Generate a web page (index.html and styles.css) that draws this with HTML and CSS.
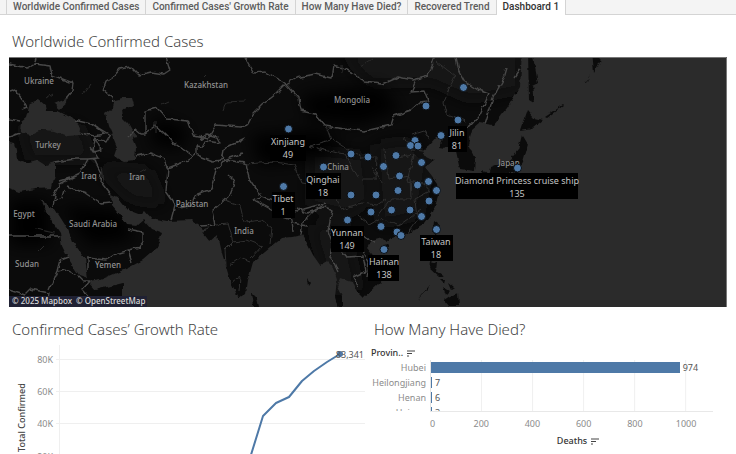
FILE: index.html
```html
<!DOCTYPE html>
<html lang="en">
<head>
<meta charset="utf-8">
<title>Dashboard 1</title>
<link rel="stylesheet" href="styles.css">
</head>
<body>
<nav class="tabs">
  <a class="tab" href="#">Worldwide Confirmed Cases</a>
  <a class="tab" href="#">Confirmed Cases' Growth Rate</a>
  <a class="tab" href="#">How Many Have Died?</a>
  <a class="tab" href="#">Recovered Trend</a>
  <a class="tab tab-active" href="#" aria-current="page">Dashboard 1</a>
</nav>
<main class="dashboard">
  <section class="map-panel">
    <h2 class="title">Worldwide Confirmed Cases</h2>
    <svg class="map" viewBox="9 57 718 250" role="img" aria-label="Map of confirmed cases">
      <defs>
        <filter id="rough" filterUnits="userSpaceOnUse" x="0" y="40" width="736" height="280" color-interpolation-filters="sRGB">
          <feTurbulence type="fractalNoise" baseFrequency="0.14" numOctaves="2" seed="4" result="n"/>
          <feDisplacementMap in="SourceGraphic" in2="n" scale="5" xChannelSelector="R" yChannelSelector="G"/>
        </filter>
        <filter id="soft"><feGaussianBlur stdDeviation="8"/></filter>
      </defs>
      <rect class="land" x="0" y="50" width="736" height="265"/>
      <g class="relief" filter="url(#soft)">
        <path d="M340 50H520V90L470 100L430 82L370 84ZM310 150L365 155L370 200L350 215L310 205ZM375 145L410 140L430 165L420 215L380 225ZM20 125H80L95 160H30ZM95 165L150 170L165 205L130 200ZM310 225L345 225L360 290H330Z"/>
      </g>
      <g class="relief-dark" filter="url(#soft)">
        <path d="M250 135L320 130L345 145L320 160L260 165ZM300 95L380 85L400 110L360 125L310 120ZM60 205L120 210L135 240L90 245ZM10 200H50V245H10ZM155 115L190 130L180 150L150 145Z"/>
      </g>
      <g filter="url(#rough)">
        <g class="sea">
          <path d="M20 132L21 122L26 118L30 103L38 100L45 106L46 111L58 111L72 118L81 128L80 135L68 136L55 131L40 130L30 135Z"/>
          <path d="M54 104L68 98L67 103L60 109Z"/>
          <path d="M115 100L123 98L132 98L134 105L122 110L123 118L128 123L132 130L138 137L132 138L136 148L135 160L125 161L114 156L117 147L108 125L105 113L113 107Z"/>
          <path d="M0 140L14 143L16 150L17 160L25 163L37 160L45 165L55 162L55 175L52 188L35 189L20 192L9 188L0 188Z"/>
          <path d="M39 197L50 208L55 209L67 228L72 241L85 258L88 278L79 275L68 258L62 246L60 233L48 215Z"/>
          <path d="M111 195L118 198L128 210L141 215L145 211L151 218L167 221L192 220L203 229L211 227L203 233L210 242L218 235L222 253L230 280L239 299L246 294L248 280L253 262L265 252L282 238L292 237L302 235L307 243L313 255L320 265L327 261L333 267L337 280L335 297L340 315H123V283L95 290L88 282L100 280L128 268L143 260L157 248L162 233L152 229L144 220L137 226L127 225L122 217L112 205Z"/>
          <path d="M342 315L342 297L337 287L340 278L352 282L355 290L363 298L380 282L382 272L377 260L367 248L372 240L382 237L387 242L392 238L408 233L425 223L433 212L438 197L437 183L432 176L425 167L434 161L426 157L423 151L430 145L437 137L444 137L439 148L445 149L453 143L456 151L460 169L474 171L475 159L468 144L472 130L480 123L493 125L507 108L520 87L522 50H740V315Z"/>
        </g>
        <g class="land">
          <path d="M528 50L533 57L538 83L532 86L534 103L529 100ZM527 110L534 118L543 120L533 128L520 130ZM522 135L528 145L523 163L517 172L505 174L488 174L490 168L510 160L518 150ZM592 50H602L600 62L594 73ZM482 171L490 173L488 182L481 181ZM434 221L438 224L436 236L433 231ZM382 245L390 244L388 251L383 251ZM251 292L257 298L259 307L253 307ZM431 261L437 263L436 272L444 277L439 277L430 269ZM440 279L445 279L444 283ZM448 283L454 288L451 290ZM443 287L450 291L446 295ZM450 296L458 293L459 306L449 306L444 300ZM430 286L418 300L429 289Z"/>
          <path d="M545 117L563 105L564 106L547 118ZM585 83L590 75L586 83ZM307 278L310 282L308 285Z"/>
        </g>
        <g class="borders">
          <path d="M9 64L28 68L35 64L37 58M35 64L50 66L52 75L73 83L72 92L66 99M9 92L15 90L22 99L27 108L22 110M9 119L20 121M9 137L20 133M16 90L22 100M74 120L91 124L105 134L94 136L81 133M92 124L110 135L106 142L95 138L101 150L93 152L90 147M95 140L93 150L98 158L88 159L75 159L55 162M88 159L80 174L60 184L53 196M93 158L101 174L100 181L111 195M67 186L86 193L101 203L111 202M55 195L53 207M60 181L70 178M64 190L62 197L53 202M9 236L60 236M87 258L106 260L115 254L139 247L143 242L143 232L128 229M128 250L132 263M88 258V270M68 257L60 260L57 271L49 290M57 271L65 269L78 276L83 281L90 281L82 290L95 304M9 290L24 295L30 289L49 293L47 307"/>
          <path d="M113 103L112 97L103 90L106 81L114 76L120 69L131 67L139 75L151 72L164 74L170 70L166 57M129 138L136 129L142 134L145 134V111L157 108L167 119L188 121L193 135L208 138L216 125L240 127L248 124L253 114L262 105L276 94L286 84M145 134L156 126L164 133L173 142L192 156M200 139L207 134L217 137L220 143L205 141L202 147L197 146V155L213 161L222 160L224 149L245 139M136 156L150 153L163 158L168 168L166 192L175 205L171 220M168 168L184 162L195 155M178 208L191 206L195 195L211 189L216 170L225 160L245 163M201 226L215 225L212 211L230 195L235 182L228 175M224 160L243 153M245 163L249 178L261 196L274 200L295 211L304 209L318 205L326 203M261 196L254 200L274 211L295 216"/>
          <path d="M245 58L254 73L266 72L282 81L286 84L296 78L315 74L331 78L333 65L343 68L355 74L363 82L382 84L398 77L413 80L428 76L432 65L437 50M286 84L299 98L301 111L315 114L325 126L344 129L365 131L391 125L394 116L411 110L420 102L429 101L425 91L411 92L416 80M456 57L459 71L465 82L478 90L489 94L479 116L469 127L458 129M296 208L307 213L325 207L332 210L328 231L333 244L331 256L338 272M274 214L292 220L293 232M301 235L303 222L315 210L324 205M293 223L308 226M333 244L342 251L347 257L363 256L366 271L353 277L358 286M342 236L352 244L363 251L369 262L367 278M351 228L366 239L375 241M485 124L493 98L504 78L507 68M520 69L514 78"/>
        </g>
        <g class="provinces">
          <path d="M437 62L455 76L447 94L443 103L446 114L466 121M326 126L331 140L309 146L327 151L345 154L358 177M333 139L361 158L377 157L376 179L363 179M245 164L275 162L294 165L302 184L323 187M358 216L370 225L382 218L398 226L422 209M384 149L388 179L410 176L411 199L391 199L378 216M397 158L414 155L407 181L424 184L430 191L415 199L417 220L407 234M333 190L341 209L362 203L377 205L386 199M371 166L384 184M412 134L424 130L430 140M405 138L412 150L423 151M217 224L228 223L233 242L225 250L226 266M233 242L247 240L262 246L251 258M245 222L262 220L272 228L270 244M225 200L240 205L244 222M230 265L240 258L250 262M232 282L240 276L239 292"/>
        </g>
        <g class="water-lines"><path d="M83 94L90 84M202 77L205 74M223 111L226 102L245 101M47 98L53 94M35 229L56 233M101 167L103 181M140 172L147 168M162 104L169 101M156 121V133M38 252L43 247M359 68L373 59M342 65L343 73"/></g>
      </g>
      <g class="places">
        <text x="39" y="84">Ukraine</text><text x="206" y="88">Kazakhstan</text><text x="352" y="103">Mongolia</text>
        <text x="48" y="148">Turkey</text><text x="89" y="179">Iraq</text><text x="137" y="180">Iran</text>
        <text x="24" y="217">Egypt</text><text x="93" y="227">Saudi Arabia</text><text x="192" y="207">Pakistan</text>
        <text x="244" y="234">India</text><text x="27" y="267">Sudan</text><text x="108" y="268">Yemen</text>
        <text x="338" y="170">China</text><text x="509" y="166">Japan</text>
      </g>
      <g class="label-boxes">
        <rect x="270" y="135" width="36" height="26"/><rect x="448" y="126" width="19" height="26"/>
        <rect x="306" y="173" width="35" height="26"/><rect x="272" y="192" width="23" height="26"/>
        <rect x="331" y="226" width="33" height="26"/><rect x="368" y="255" width="31" height="26"/>
        <rect x="420" y="235" width="33" height="26"/><rect x="456" y="173" width="122" height="26"/>
      </g>
      <g class="dots">
        <circle cx="288.5" cy="129" r="4"/><circle cx="463.5" cy="87.5" r="4"/><circle cx="426" cy="106" r="4"/><circle cx="458" cy="120" r="4"/>
        <circle cx="441" cy="135.5" r="4"/><circle cx="415" cy="140.5" r="4"/><circle cx="410.5" cy="145.5" r="4"/><circle cx="418" cy="146" r="4"/>
        <circle cx="351" cy="154" r="4"/><circle cx="368" cy="157" r="4"/><circle cx="396" cy="155.5" r="4"/><circle cx="383.5" cy="166.5" r="4"/>
        <circle cx="421.5" cy="162.5" r="4"/><circle cx="399.5" cy="176" r="4"/><circle cx="323.5" cy="167" r="4"/><circle cx="283.5" cy="186.5" r="4"/>
        <circle cx="351" cy="195" r="4"/><circle cx="376" cy="195" r="4"/><circle cx="398" cy="190.5" r="4"/><circle cx="417.5" cy="185" r="4"/>
        <circle cx="428.5" cy="181.5" r="4"/><circle cx="436.5" cy="190.5" r="4"/><circle cx="429" cy="201" r="4"/><circle cx="371" cy="212" r="4"/>
        <circle cx="391.5" cy="210" r="4"/><circle cx="410" cy="210" r="4"/><circle cx="421.5" cy="216.5" r="4"/><circle cx="347.5" cy="220" r="4"/>
        <circle cx="381" cy="226.5" r="4"/><circle cx="397" cy="232" r="4"/><circle cx="401" cy="235.5" r="4"/><circle cx="436.5" cy="229.5" r="4"/>
        <circle cx="384" cy="249.5" r="4"/><circle cx="517.5" cy="168" r="4"/>
      </g>
      <g class="labels">
        <text x="288" y="145">Xinjiang</text><text x="288" y="158">49</text>
        <text x="457" y="136">Jilin</text><text x="457" y="149">81</text>
        <text x="323" y="183">Qinghai</text><text x="323" y="196">18</text>
        <text x="283" y="202">Tibet</text><text x="283" y="215">1</text>
        <text x="347" y="236">Yunnan</text><text x="347" y="249">149</text>
        <text x="384" y="265">Hainan</text><text x="384" y="278">138</text>
        <text x="436" y="245">Taiwan</text><text x="436" y="258">18</text>
        <text x="517" y="184">Diamond Princess cruise ship</text><text x="517" y="197">135</text>
      </g>
      <rect class="credit-box" x="9" y="296" width="138" height="11"/>
      <text class="credit" x="12" y="304">© 2025 Mapbox</text><text class="credit" x="76" y="304">© OpenStreetMap</text>
      <path class="frame" d="M9 57.5H726.5V307"/>
    </svg>
  </section>
  <div class="charts">
    <section class="growth">
      <h2 class="title">Confirmed Cases’ Growth Rate</h2>
      <svg class="line-chart" viewBox="9 344 358 110" role="img" aria-label="Total confirmed cases over time">
        <path class="grid-line" d="M56 359.5H365M56 391.5H365M56 423.5H365M59.5 345V454"/>
        <g class="ticks"><text x="53" y="363">80K</text><text x="53" y="395">60K</text><text x="53" y="427">40K</text><text x="53" y="460">20K</text></g>
        <text class="axis-title" transform="translate(25 452) rotate(-90)">Total Confirmed</text>
        <path class="trend" d="M250 458L263 416L276 403L289 397L302 381L314 371L327 362L340 354"/>
        <circle class="last" cx="340" cy="354" r="3"/>
        <text class="last-label" x="364" y="358">83,341</text>
      </svg>
    </section>
    <section class="deaths">
      <h2 class="title">How Many Have Died?</h2>
      <button class="sort-head" type="button">Provin.. <svg class="sort" viewBox="0 0 8 7"><path d="M0 1H8M0 3.5H5M0 6H2"/></svg></button>
      <div class="bars">
        <div class="row"><span class="name">Hubei</span><span class="track"><i class="bar" style="width:88.2%"></i>974</span></div>
        <div class="row"><span class="name">Heilongjiang</span><span class="track"><i class="bar" style="width:1px"></i>7</span></div>
        <div class="row"><span class="name">Henan</span><span class="track"><i class="bar" style="width:1px"></i>6</span></div>
        <div class="row"><span class="name">Hainan</span><span class="track"><i class="bar" style="width:1px"></i>3</span></div>
      </div>
      <div class="axis"><span>0</span><span>200</span><span>400</span><span>600</span><span>800</span><span>1000</span></div>
      <button class="sort-head sort-foot" type="button">Deaths <svg class="sort" viewBox="0 0 8 7"><path d="M0 1H8M0 3.5H5M0 6H2"/></svg></button>
    </section>
  </div>
</main>
</body>
</html>
```
FILE: styles.css
```css
* { box-sizing: border-box; }
body {
  margin: 0;
  height: 100vh;
  overflow: hidden;
  background: #fff;
  color: #555;
  font-family: "Noto Sans", "Open Sans", sans-serif;
}
.tabs {
  display: flex;
  height: 15px;
  padding-left: 6px;
  background: #f4f4f4;
  border-bottom: 1px solid #d4d4d4;
}
.tab {
  height: 14px;
  padding: 0 6px;
  border-left: 1px solid #d4d4d4;
  color: #5c5c5c;
  font: 500 10px/14px Roboto, sans-serif;
  text-decoration: none;
  white-space: nowrap;
}
.tab-active {
  height: 15px;
  background: #fff;
  border-right: 1px solid #d4d4d4;
  color: #333;
}
.dashboard { padding: 0 9px; }
.title {
  margin: 0;
  padding: 0 3px;
  color: #444;
  font-size: 15px;
  font-weight: 300;
  line-height: 24px;
  white-space: nowrap;
}
.map-panel { padding-top: 14px; }
.map-panel .title { margin-bottom: 4px; }
.map { display: block; width: 100%; height: auto; }
.land { fill: #0b0b0b; }
.sea { fill: #2b2b2b; }
.relief { fill: #131313; }
.relief-dark { fill: #000; }
.borders { fill: none; stroke: #484848; stroke-width: 1.4; stroke-linejoin: round; }
.provinces { fill: none; stroke: #303030; stroke-width: 1; }
.water-lines { fill: none; stroke: #2b2b2b; stroke-width: 1; }
.places { fill: #929292; font-size: 8px; font-weight: 500; text-anchor: middle; }
.label-boxes { fill: #000; }
.labels { fill: #c4c4c4; font-size: 9px; text-anchor: middle; }
.dots { fill: #4e79a7; stroke: #0b0f14; stroke-width: 1; }
.credit-box { fill: #202133; }
.credit { fill: #d8d8d8; font-size: 8px; font-weight: 500; }
.frame { fill: none; stroke: #777; stroke-width: 1; }
.charts { display: grid; grid-template-columns: 358fr 360fr; padding-top: 10px; }
.growth, .deaths { min-width: 0; }
.growth .title { margin-bottom: 3px; }
.line-chart { display: block; width: 100%; }
.grid-line { fill: none; stroke: #efefef; }
.ticks { fill: #8c8c8c; font-size: 9px; text-anchor: end; }
.axis-title { fill: #444; font-size: 9px; font-weight: 500; }
.trend { fill: none; stroke: #4e79a7; stroke-width: 2; stroke-linejoin: round; }
.last { fill: #4e79a7; }
.last-label { fill: #555; font-size: 9px; text-anchor: end; }
.deaths { padding: 0 14px 0 4px; }
.sort-head {
  display: flex;
  align-items: center;
  gap: 4px;
  padding: 0;
  margin-top: 6px;
  border: 0;
  background: none;
  color: #333;
  font: 500 9px/12px "Noto Sans", sans-serif;
}
.sort { width: 8px; height: 7px; fill: none; stroke: #444; }
.bars { height: 51px; margin-top: 1px; overflow: hidden; }
.row {
  display: grid;
  grid-template-columns: 55px 1fr;
  column-gap: 4px;
  height: 15px;
  font-size: 9px;
  line-height: 15px;
}
.name { color: #8c8c8c; text-align: right; white-space: nowrap; }
.track {
  display: flex;
  align-items: center;
  gap: 3px;
  border-left: 1px solid #e4e4e4;
  background: linear-gradient(to left, #efefef 1px, transparent 1px) 0 0 / 18.1% 100%;
}
.bar { flex: none; height: 11px; background: #4e79a7; }
.axis {
  display: grid;
  grid-template-columns: repeat(6, 18.1%);
  margin-left: 59px;
  border-top: 1px solid #e8e8e8;
  padding-top: 5px;
  color: #8c8c8c;
  font-size: 9px;
  line-height: 13px;
}
.axis span { margin-left: -100%; text-align: center; }
.axis span:first-child { margin-left: 0; text-align: left; }
.sort-foot { margin: 5px 0 0 72px; width: calc(100% - 72px); justify-content: center; }
```
